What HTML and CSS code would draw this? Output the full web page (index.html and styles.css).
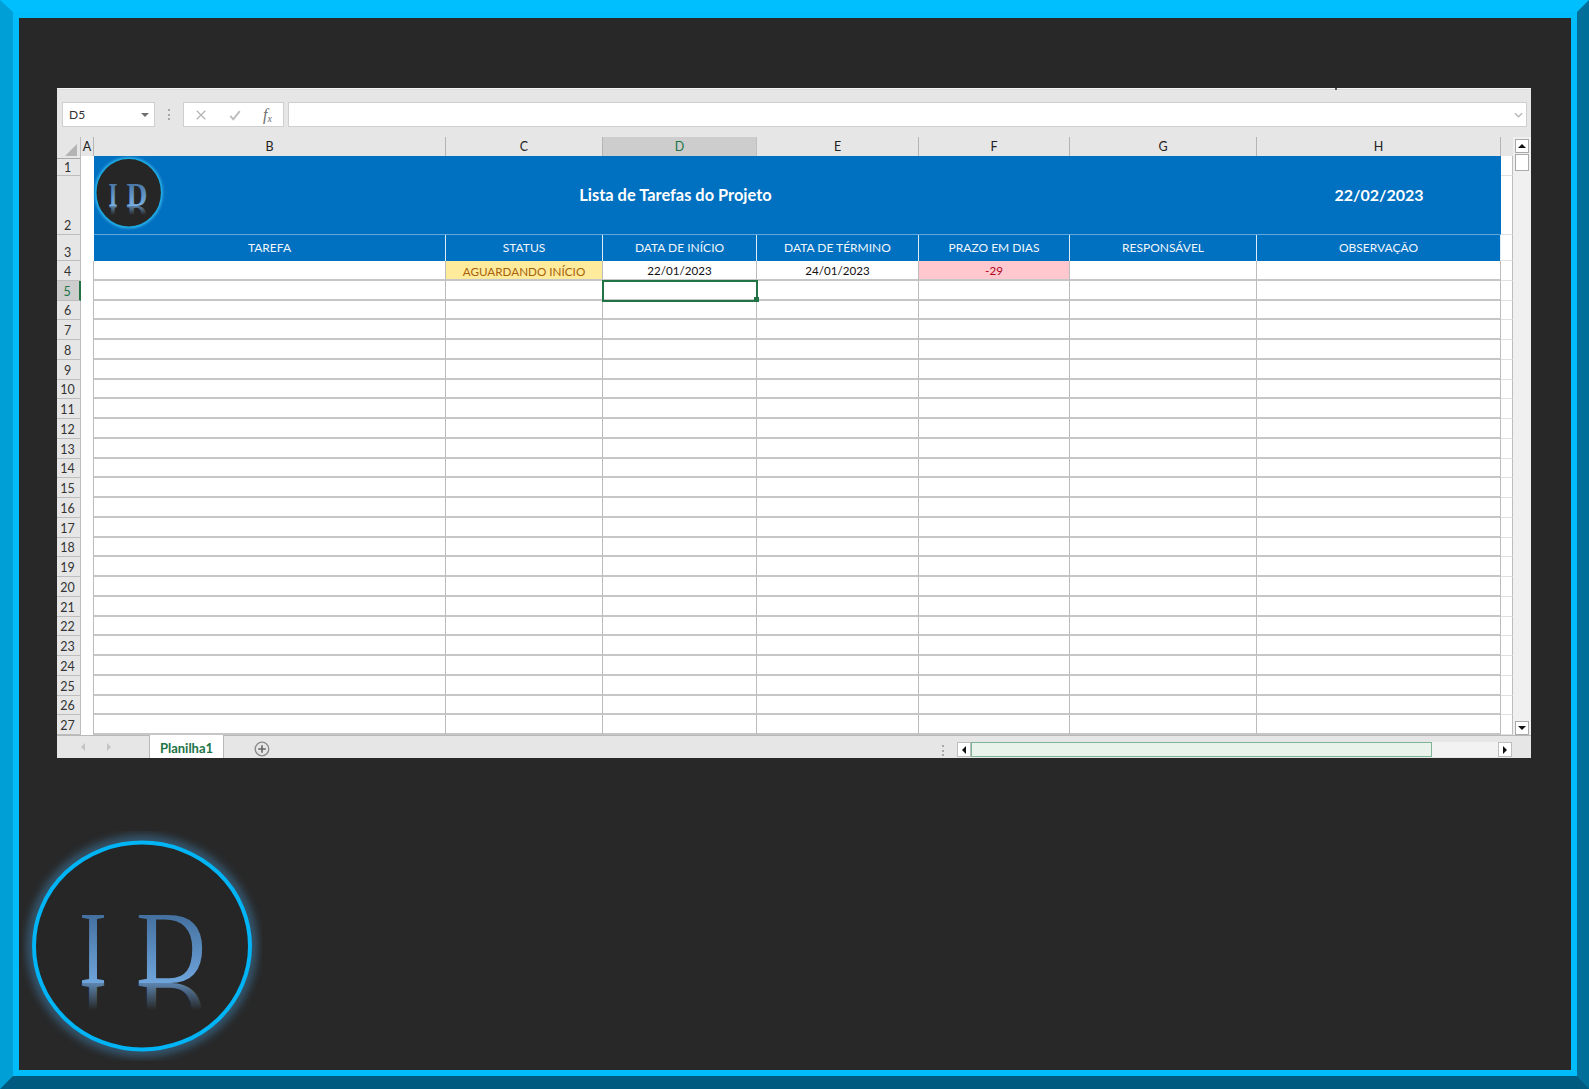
FILE: index.html
```html
<!DOCTYPE html>
<html lang="pt-BR">
<head>
<meta charset="utf-8">
<title>Lista de Tarefas do Projeto</title>
<link rel="stylesheet" href="styles.css">
</head>
<body>
<div class="frame">
<div class="stage">
  <section class="sheet">
    <span class="tick"></span>
    <div class="toolbar">
      <div class="namebox"><span>D5</span><i class="caret"></i></div>
      <i class="grip"></i>
      <div class="fxbox">
        <svg class="fxicon" viewBox="0 0 14 14"><path d="M2 2l10 10M12 2L2 12" fill="none" stroke="#b4b4b4" stroke-width="1.4"/></svg>
        <svg class="fxicon" viewBox="0 0 14 14"><path d="M1.5 8l3.5 4L12.5 2.5" fill="none" stroke="#bcbcbc" stroke-width="2.2"/></svg>
        <span class="fxlabel">f<sub>x</sub></span>
      </div>
      <div class="formula">
        <svg class="chevron" viewBox="0 0 10 6"><path d="M1 1l4 4 4-4" fill="none" stroke="#b8b8b8" stroke-width="1.5"/></svg>
      </div>
    </div>
    <div class="sheetbody">
      <div class="grid">
        <div class="row colheads">
          <div class="corner"><i></i></div>
          <div class="ch cha">A</div>
          <div class="ch">B</div><div class="ch">C</div><div class="ch active">D</div><div class="ch">E</div><div class="ch">F</div><div class="ch">G</div><div class="ch">H</div>
          <div class="chend"></div>
        </div>
        <div class="row banner">
          <div class="lab l1">1</div>
          <div class="lab l2">2</div>
          <div class="cola bannera"></div>
          <div class="title">
            <svg class="logosmall" viewBox="0 0 72 76" aria-hidden="true">
              <defs>
                <linearGradient id="sf" gradientUnits="userSpaceOnUse" x1="0" y1="28" x2="0" y2="50"><stop offset="0" stop-color="#4a78a8"/><stop offset="1" stop-color="#78aee2"/></linearGradient>
                <linearGradient id="sr" gradientUnits="userSpaceOnUse" x1="0" y1="41" x2="0" y2="50"><stop offset="0" stop-color="#78aee2" stop-opacity="0"/><stop offset="1" stop-color="#78aee2" stop-opacity=".7"/></linearGradient>
                <filter id="sglow" x="-10%" y="-10%" width="120%" height="120%"><feGaussianBlur stdDeviation="1"/></filter>
              </defs>
              <ellipse cx="35.7" cy="36.7" rx="33.5" ry="35" fill="none" stroke="#4db4ea" stroke-width="2" opacity=".7" filter="url(#sglow)"/>
              <ellipse cx="35.7" cy="36.7" rx="33" ry="34.5" fill="#262626" stroke="#1aa9e4" stroke-width="1.6"/>
              <text class="serif" x="15.5" y="50" font-size="33" fill="url(#sf)" textLength="9" lengthAdjust="spacingAndGlyphs">I</text>
              <text class="serif" x="33.5" y="50" font-size="33" fill="url(#sf)" textLength="21" lengthAdjust="spacingAndGlyphs">D</text>
              <g transform="translate(0,100) scale(1,-1)">
                <text class="serif" x="15.5" y="50" font-size="33" fill="url(#sr)" textLength="9" lengthAdjust="spacingAndGlyphs">I</text>
                <text class="serif" x="33.5" y="50" font-size="33" fill="url(#sr)" textLength="21" lengthAdjust="spacingAndGlyphs">D</text>
              </g>
            </svg>
            Lista de Tarefas do Projeto
          </div>
          <div class="date">22/02/2023</div>
          <div class="ext e1"></div>
          <div class="ext e2"></div>
        </div>
        <div class="row heads">
          <div class="lab bottom">3</div><div class="cola"></div>
          <div class="hd">TAREFA</div><div class="hd">STATUS</div><div class="hd">DATA DE INÍCIO</div><div class="hd">DATA DE TÉRMINO</div><div class="hd">PRAZO EM DIAS</div><div class="hd">RESPONSÁVEL</div><div class="hd">OBSERVAÇÃO</div><div class="ext"></div>
        </div>
        <div class="row data">
          <div class="lab">4</div><div class="cola"></div>
          <div class="c"></div><div class="c status">AGUARDANDO INÍCIO</div><div class="c">22/01/2023</div><div class="c">24/01/2023</div><div class="c late">-29</div><div class="c"></div><div class="c"></div><div class="ext"></div>
        </div>
        <div class="row data">
          <div class="lab cur">5</div><div class="cola"></div>
          <div class="c"></div><div class="c"></div><div class="c sel"></div><div class="c"></div><div class="c"></div><div class="c"></div><div class="c"></div><div class="ext"></div>
        </div>
        <div class="row data"><div class="lab">6</div><div class="cola"></div><div class="c"></div><div class="c"></div><div class="c"></div><div class="c"></div><div class="c"></div><div class="c"></div><div class="c"></div><div class="ext"></div></div>
        <div class="row data"><div class="lab">7</div><div class="cola"></div><div class="c"></div><div class="c"></div><div class="c"></div><div class="c"></div><div class="c"></div><div class="c"></div><div class="c"></div><div class="ext"></div></div>
        <div class="row data"><div class="lab">8</div><div class="cola"></div><div class="c"></div><div class="c"></div><div class="c"></div><div class="c"></div><div class="c"></div><div class="c"></div><div class="c"></div><div class="ext"></div></div>
        <div class="row data"><div class="lab">9</div><div class="cola"></div><div class="c"></div><div class="c"></div><div class="c"></div><div class="c"></div><div class="c"></div><div class="c"></div><div class="c"></div><div class="ext"></div></div>
        <div class="row data"><div class="lab">10</div><div class="cola"></div><div class="c"></div><div class="c"></div><div class="c"></div><div class="c"></div><div class="c"></div><div class="c"></div><div class="c"></div><div class="ext"></div></div>
        <div class="row data"><div class="lab">11</div><div class="cola"></div><div class="c"></div><div class="c"></div><div class="c"></div><div class="c"></div><div class="c"></div><div class="c"></div><div class="c"></div><div class="ext"></div></div>
        <div class="row data"><div class="lab">12</div><div class="cola"></div><div class="c"></div><div class="c"></div><div class="c"></div><div class="c"></div><div class="c"></div><div class="c"></div><div class="c"></div><div class="ext"></div></div>
        <div class="row data"><div class="lab">13</div><div class="cola"></div><div class="c"></div><div class="c"></div><div class="c"></div><div class="c"></div><div class="c"></div><div class="c"></div><div class="c"></div><div class="ext"></div></div>
        <div class="row data"><div class="lab">14</div><div class="cola"></div><div class="c"></div><div class="c"></div><div class="c"></div><div class="c"></div><div class="c"></div><div class="c"></div><div class="c"></div><div class="ext"></div></div>
        <div class="row data"><div class="lab">15</div><div class="cola"></div><div class="c"></div><div class="c"></div><div class="c"></div><div class="c"></div><div class="c"></div><div class="c"></div><div class="c"></div><div class="ext"></div></div>
        <div class="row data"><div class="lab">16</div><div class="cola"></div><div class="c"></div><div class="c"></div><div class="c"></div><div class="c"></div><div class="c"></div><div class="c"></div><div class="c"></div><div class="ext"></div></div>
        <div class="row data"><div class="lab">17</div><div class="cola"></div><div class="c"></div><div class="c"></div><div class="c"></div><div class="c"></div><div class="c"></div><div class="c"></div><div class="c"></div><div class="ext"></div></div>
        <div class="row data"><div class="lab">18</div><div class="cola"></div><div class="c"></div><div class="c"></div><div class="c"></div><div class="c"></div><div class="c"></div><div class="c"></div><div class="c"></div><div class="ext"></div></div>
        <div class="row data"><div class="lab">19</div><div class="cola"></div><div class="c"></div><div class="c"></div><div class="c"></div><div class="c"></div><div class="c"></div><div class="c"></div><div class="c"></div><div class="ext"></div></div>
        <div class="row data"><div class="lab">20</div><div class="cola"></div><div class="c"></div><div class="c"></div><div class="c"></div><div class="c"></div><div class="c"></div><div class="c"></div><div class="c"></div><div class="ext"></div></div>
        <div class="row data"><div class="lab">21</div><div class="cola"></div><div class="c"></div><div class="c"></div><div class="c"></div><div class="c"></div><div class="c"></div><div class="c"></div><div class="c"></div><div class="ext"></div></div>
        <div class="row data"><div class="lab">22</div><div class="cola"></div><div class="c"></div><div class="c"></div><div class="c"></div><div class="c"></div><div class="c"></div><div class="c"></div><div class="c"></div><div class="ext"></div></div>
        <div class="row data"><div class="lab">23</div><div class="cola"></div><div class="c"></div><div class="c"></div><div class="c"></div><div class="c"></div><div class="c"></div><div class="c"></div><div class="c"></div><div class="ext"></div></div>
        <div class="row data"><div class="lab">24</div><div class="cola"></div><div class="c"></div><div class="c"></div><div class="c"></div><div class="c"></div><div class="c"></div><div class="c"></div><div class="c"></div><div class="ext"></div></div>
        <div class="row data"><div class="lab">25</div><div class="cola"></div><div class="c"></div><div class="c"></div><div class="c"></div><div class="c"></div><div class="c"></div><div class="c"></div><div class="c"></div><div class="ext"></div></div>
        <div class="row data"><div class="lab">26</div><div class="cola"></div><div class="c"></div><div class="c"></div><div class="c"></div><div class="c"></div><div class="c"></div><div class="c"></div><div class="c"></div><div class="ext"></div></div>
        <div class="row data"><div class="lab">27</div><div class="cola"></div><div class="c"></div><div class="c"></div><div class="c"></div><div class="c"></div><div class="c"></div><div class="c"></div><div class="c"></div><div class="ext"></div></div>
      </div>
      <div class="vscroll">
        <div class="sbtn"><i class="tri up"></i></div>
        <div class="vthumb"></div>
        <div class="sbtn bottombtn"><i class="tri down"></i></div>
      </div>
    </div>
    <div class="tabbar">
      <div class="tabnav"><i class="tri left faint"></i><i class="tri right faint"></i></div>
      <div class="tab">Planilha1</div>
      <svg class="addsheet" viewBox="0 0 16 16"><circle cx="8" cy="8" r="6.8" fill="none" stroke="#8a8a8a" stroke-width="1.3"/><path d="M8 4.2v7.6M4.2 8h7.6" fill="none" stroke="#666" stroke-width="1.6"/></svg>
      <i class="grip gripbottom"></i>
      <div class="hscroll">
        <div class="hbtn"><i class="tri left"></i></div>
        <div class="hthumb"></div>
        <div class="hbtn hend"><i class="tri right"></i></div>
      </div>
    </div>
  </section>
  <svg class="logo" viewBox="0 0 240 230" aria-hidden="true">
    <defs>
      <linearGradient id="lf" gradientUnits="userSpaceOnUse" x1="0" y1="84" x2="0" y2="152"><stop offset="0" stop-color="#44709f"/><stop offset="1" stop-color="#6fa5dc"/></linearGradient>
      <linearGradient id="lr" gradientUnits="userSpaceOnUse" x1="0" y1="125" x2="0" y2="152"><stop offset="0" stop-color="#6fa5dc" stop-opacity="0"/><stop offset="1" stop-color="#6fa5dc" stop-opacity=".75"/></linearGradient>
      <filter id="glow" x="-10%" y="-10%" width="120%" height="120%"><feGaussianBlur stdDeviation="4"/></filter>
    </defs>
    <ellipse cx="120" cy="115" rx="110" ry="105.5" fill="none" stroke="#3f86b8" stroke-width="10" opacity=".55" filter="url(#glow)"/>
    <ellipse cx="120" cy="115" rx="108" ry="103.5" fill="#262626" stroke="#00b4f5" stroke-width="4"/>
    <text class="serif" x="57" y="152" font-size="103" fill="url(#lf)" textLength="28" lengthAdjust="spacingAndGlyphs">I</text>
    <text class="serif" x="114" y="152" font-size="103" fill="url(#lf)" textLength="70" lengthAdjust="spacingAndGlyphs">D</text>
    <g transform="translate(0,304) scale(1,-1)">
      <text class="serif" x="57" y="152" font-size="103" fill="url(#lr)" textLength="28" lengthAdjust="spacingAndGlyphs">I</text>
      <text class="serif" x="114" y="152" font-size="103" fill="url(#lr)" textLength="70" lengthAdjust="spacingAndGlyphs">D</text>
    </g>
  </svg>
</div>
</div>
</body>
</html>
```
FILE: styles.css
```css
* { box-sizing: border-box; }
html, body { margin: 0; padding: 0; background: #282828; }
body { font-family: Lato, "Open Sans", sans-serif; }

.frame {
  width: 1589px;
  height: 1089px;
  border-style: solid;
  border-width: 12px 12px 13px 13px;
  border-color: #00bfff #006f9a #005a80 #009fd6;
  overflow: hidden;
}
.stage {
  height: 100%;
  border: 6px solid #00bcfb;
  background: #282828;
  padding: 70px 0 0 38px;
}

/* Sheet */
.sheet {
  position: relative;
  width: 1474px;
  height: 670px;
  background: #e6e6e6;
  border-top: 1px solid #f4f4f4;
  display: flex;
  flex-direction: column;
}
.tick {
  position: absolute;
  left: 1278px;
  top: -1px;
  width: 2px;
  height: 2px;
  background: #555;
}
.toolbar {
  height: 48px;
  flex: none;
  display: flex;
  align-items: flex-start;
  padding: 12px 4px 0 5px;
  border-top: 1px solid #dcdcdc;
}
.namebox, .fxbox, .formula {
  height: 25px;
  background: #fff;
  border: 1px solid #cfcfcf;
}
.namebox {
  width: 93px;
  display: flex;
  align-items: center;
  justify-content: space-between;
  padding: 0 5px 0 6px;
  font-size: 12px;
  color: #333;
}
.caret {
  border: 4px solid transparent;
  border-top: 4px solid #6e6e6e;
  border-bottom: 0;
  width: 0;
  height: 0;
}
.grip {
  width: 0;
  height: 11px;
  margin: 7px 13px 0 13px;
  border-left: 2px dotted #a8a8a8;
}
.fxbox {
  width: 101px;
  display: flex;
  align-items: center;
  justify-content: space-between;
  padding: 0 11px 0 11px;
  margin-right: 4px;
}
.fxicon { width: 12px; height: 12px; }
.fxlabel {
  font-family: "Liberation Serif", serif;
  font-style: italic;
  font-size: 16px;
  color: #6d6d6d;
  line-height: 1;
}
.fxlabel sub { font-size: 10px; vertical-align: -2px; line-height: 0; }
.formula {
  flex: 1;
  display: flex;
  align-items: center;
  justify-content: flex-end;
  padding-right: 3px;
}
.chevron { width: 9px; height: 6px; }

/* Grid */
.sheetbody { flex: 1; display: flex; min-height: 0; }
.grid { width: 1456px; overflow: hidden; }
.row {
  display: grid;
  grid-template-columns: 24px 13px 352px 157px 154px 162px 151px 187px 244px 12px;
}
.colheads { height: 19px; font-size: 12.5px; color: #222; }
.corner {
  border-right: 1px solid #bdbdbd;
  border-bottom: 1px solid #a8a8a8;
  position: relative;
}
.corner i {
  position: absolute;
  right: 3px;
  bottom: 2px;
  width: 0;
  height: 0;
  border-style: solid;
  border-width: 0 0 12px 12px;
  border-color: transparent transparent #b4b4b4 transparent;
}
.ch {
  border-right: 1px solid #b4b4b4;
  border-bottom: 1px solid #a8a8a8;
  text-align: center;
  line-height: 20px;
}
.ch.active {
  background: #cdcdcd;
  color: #217346;
  border-bottom: 2px solid #217346;
  border-right-color: #c0c0c0;
}
.chend { border-bottom: 1px solid #a8a8a8; }

.banner { grid-template-rows: 20px 59px; }
.lab {
  background: #e6e6e6;
  border-right: 1px solid #bdbdbd;
  border-bottom: 1px solid #bdbdbd;
  text-align: center;
  font-size: 12.5px;
  color: #333;
  padding: 2px 2px 0 0;
  display: flex;
  align-items: center;
  justify-content: center;
}
.lab.l1 { grid-column: 1; grid-row: 1; padding-top: 4px; }
.l2 { grid-column: 1; grid-row: 2; }
.lab.l2, .lab.bottom { align-items: flex-end; }
.lab.l2 { padding-bottom: 1px; }
.lab.cur {
  background: #cdcdcd;
  color: #217346;
  border-right: 2px solid #217346;
}
.cola { background: #fff; }
.data .cola { border-right: 1px solid #bcbcbc; }
.bannera { grid-column: 2; grid-row: 1 / span 2; }
.title, .date {
  background: #0070c0;
  color: #fff;
  font-weight: 700;
  display: flex;
  align-items: center;
  justify-content: center;
  border-bottom: 1px solid #5fa8dc;
  grid-row: 1 / span 2;
  padding-bottom: 1px;
}
.title { grid-column: 3 / span 6; position: relative; font-size: 16.4px; }
.date { grid-column: 9; font-size: 16px; }
.logosmall {
  position: absolute;
  left: -1px;
  top: 0;
  width: 72px;
  height: 76px;
}
.ext { background: #fff; border-right: 1px solid #bdbdbd; border-bottom: 1px solid #e0e0e0; }
.e1 { grid-column: 10; grid-row: 1; }
.e2 { grid-column: 10; grid-row: 2; }

.heads { height: 26px; }
.hd {
  background: #0070c0;
  color: #f0f6fb;
  font-size: 12px;
  padding-bottom: 1px;
  display: flex;
  align-items: center;
  justify-content: center;
  border-right: 1px solid #dcecf7;
  border-left: 0;
}
.data { height: 19.75px; }
.c {
  border-right: 1px solid #bcbcbc;
  border-bottom: 2px solid #c6c6c6;
  padding-top: 2px;
  font-size: 11.6px;
  color: #111;
  display: flex;
  align-items: center;
  justify-content: center;
  background: #fff;
  min-width: 0;
}
.status { background: #ffeb9c; color: #a8620a; font-size: 11.7px; }
.late { background: #ffc7ce; color: #b0061a; }
.sel { position: relative; outline: 2px solid #217346; outline-offset: -1px; z-index: 2; }
.sel::after {
  content: "";
  position: absolute;
  right: -3px;
  bottom: -3px;
  width: 5px;
  height: 5px;
  background: #217346;
  border: 0;
}

/* Scrollbars */
.vscroll {
  width: 18px;
  height: 100%;
  background: #f0f0f0;
  padding: 2px 2px 0;
  display: flex;
  flex-direction: column;
}
.sbtn {
  width: 14px;
  height: 14px;
  background: #fff;
  border: 1px solid #a9a9a9;
  display: flex;
  align-items: center;
  justify-content: center;
  flex: none;
}
.vthumb { width: 14px; height: 17px; background: #fff; border: 1px solid #a9a9a9; margin-top: 1px; }
.bottombtn { margin-top: auto; }
.tri { width: 0; height: 0; border: 4px solid transparent; display: block; }
.tri.up { border-top: 0; border-bottom-color: #111; }
.tri.down { border-bottom: 0; border-top-color: #111; }
.tri.left { border-left: 0; border-right-color: #111; }
.tri.right { border-right: 0; border-left-color: #111; }
.tri.left.faint { border-right-color: #c4c4c4; }
.tri.right.faint { border-left-color: #c4c4c4; }

.tabbar {
  flex: none;
  height: 23px;
  display: flex;
  align-items: stretch;
  border-top: 1px solid #b8b8b8;
  background: #e6e6e6;
}
.tabnav {
  width: 93px;
  display: flex;
  align-items: center;
  gap: 22px;
  padding-left: 24px;
  border-right: 1px solid #b8b8b8;
}
.tab {
  width: 74px;
  background: #fff;
  margin-top: -1px;
  padding-top: 3px;
  border-right: 1px solid #b8b8b8;
  color: #217346;
  font-weight: 700;
  font-size: 13px;
  display: flex;
  align-items: center;
  justify-content: center;
}
.addsheet { width: 16px; height: 16px; margin: 5px 0 0 30px; }
.gripbottom { margin: 9px 0 0 672px; height: 11px; }
.hscroll {
  position: relative;
  margin: 6px 0 0 13px;
  width: 555px;
  height: 15px;
  background: #f2f2f2;
  display: flex;
}
.hbtn {
  width: 14px;
  height: 15px;
  background: #fff;
  border: 1px solid #bdbdbd;
  display: flex;
  align-items: center;
  justify-content: center;
}
.hthumb { width: 461px; background: #e9f3ec; border: 1px solid #7fb597; }
.hend { margin-left: auto; }

/* Logo */
.logo { display: block; width: 240px; height: 230px; margin: 73px 0 0 -35px; }
.serif { font-family: "Liberation Serif", serif; }
```
